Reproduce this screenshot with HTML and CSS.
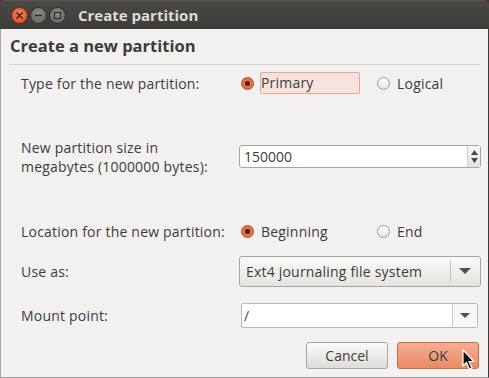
FILE: index.html
```html
<!DOCTYPE html>
<html lang="en">
<head>
    <meta charset="UTF-8">
    <title>Create partition</title>
    <link rel="stylesheet" href="styles.css">
</head>
<body>
    <div class="window">
        <div class="titlebar">
            <div class="wm-buttons">
                <span class="wm close">
                    <svg width="9" height="9" viewBox="0 0 9 9"><path d="M1.5 1.5 L7.5 7.5 M7.5 1.5 L1.5 7.5" stroke="#3a1a10" stroke-width="1.4"/></svg>
                </span>
                <span class="wm">
                    <svg width="9" height="9" viewBox="0 0 9 9"><path d="M1 4.5 H8" stroke="#2e2e2c" stroke-width="1.4"/></svg>
                </span>
                <span class="wm">
                    <svg width="9" height="9" viewBox="0 0 9 9"><rect x="1.5" y="1.5" width="6" height="6" fill="none" stroke="#2e2e2c" stroke-width="1.2"/></svg>
                </span>
            </div>
            <span class="title">Create partition</span>
        </div>
        <div class="content">
            <h1 class="heading">Create a new partition</h1>
            <div class="form">
                <div class="row row-type">
                    <label class="label">Type for the new partition:</label>
                    <div class="radios">
                        <div class="option">
                            <span class="radio checked"></span>
                            <span class="radio-text focus">Primary</span>
                        </div>
                        <div class="option">
                            <span class="radio"></span>
                            <span class="radio-text">Logical</span>
                        </div>
                    </div>
                </div>
                <div class="row row-size">
                    <label class="label">New partition size in<br>megabytes (1000000 bytes):</label>
                    <div class="spin">
                        <span class="spin-value">150000</span>
                        <span class="spin-arrows">
                            <svg width="9" height="17" viewBox="0 0 9 17"><path d="M1 7 L4.5 2 L8 7 Z M1 10 L4.5 15 L8 10 Z" fill="#4a4a48"/></svg>
                        </span>
                    </div>
                </div>
                <div class="row row-loc">
                    <label class="label">Location for the new partition:</label>
                    <div class="radios">
                        <div class="option">
                            <span class="radio checked"></span>
                            <span class="radio-text">Beginning</span>
                        </div>
                        <div class="option">
                            <span class="radio"></span>
                            <span class="radio-text">End</span>
                        </div>
                    </div>
                </div>
                <div class="row row-use">
                    <label class="label">Use as:</label>
                    <div class="combo">
                        <span class="combo-text">Ext4 journaling file system</span>
                        <span class="combo-sep"></span>
                        <span class="combo-arrow"></span>
                    </div>
                </div>
                <div class="row row-mount">
                    <label class="label">Mount point:</label>
                    <div class="entry-combo">
                        <span class="entry-text">/</span>
                        <span class="entry-arrow"><span class="combo-arrow"></span></span>
                    </div>
                </div>
            </div>
            <div class="actions">
                <button class="btn">Cancel</button>
                <button class="btn btn-ok">OK
                    <svg class="cursor" width="14" height="22" viewBox="0 0 14 22"><path d="M1 1 L1 17 L4.5 13.5 L7.5 20 L10 19 L7 12.5 L12 12.5 Z" fill="#111" stroke="#fff" stroke-width="1.2" stroke-linejoin="round"/></svg>
                </button>
            </div>
        </div>
    </div>
</body>
</html>
```

FILE: styles.css
```css
* {
    box-sizing: border-box;
}
html, body {
    margin: 0;
    padding: 0;
    background-color: #5a2a45;
}
body {
    font-family: "Open Sans", "DejaVu Sans", sans-serif;
    font-size: 14px;
    color: #3c3c3c;
    width: 489px;
    height: 378px;
    overflow: hidden;
}
.window {
    width: 489px;
    height: 378px;
    display: flex;
    flex-direction: column;
    border-radius: 5px 5px 0 0;
    overflow: hidden;
    background-color: #3c3b37;
}
.titlebar {
    height: 29px;
    flex-shrink: 0;
    display: flex;
    align-items: center;
    background: linear-gradient(#4a4945, #3c3b37);
    border-top: 1px solid #56554f;
    padding-left: 11px;
}
.wm-buttons {
    display: flex;
    gap: 2px;
    margin-right: 12px;
}
.wm {
    width: 17px;
    height: 17px;
    border-radius: 50%;
    background: radial-gradient(circle at 50% 35%, #8d8c87, #5f5e5a);
    border: 1px solid #2e2d2a;
    display: flex;
    align-items: center;
    justify-content: center;
}
.wm.close {
    background: radial-gradient(circle at 50% 35%, #f6835a, #d9451b);
    border-color: #6b2a14;
}
.title {
    color: #dfdbd2;
    font-weight: bold;
    font-size: 15px;
}
.content {
    flex: 1;
    background-color: #f2f1f0;
    border-left: 1px solid #a4a39e;
    border-right: 1px solid #3c3b37;
    border-bottom: 1px solid #a4a39e;
    padding: 0 8px 0 8px;
    display: flex;
    flex-direction: column;
}
.heading {
    margin: 0;
    font-size: 16.5px;
    font-weight: bold;
    color: #3c3c3c;
    padding: 7px 0 8px 1px;
    border-bottom: 1px solid #d6d4d0;
    line-height: 20px;
}
.form {
    padding-left: 12px;
}
.row {
    display: grid;
    grid-template-columns: 218px 242px;
    align-items: center;
}
.row-type {
    height: 36px;
}
.row-size {
    height: 52px;
    margin-top: 30px;
}
.row-loc {
    height: 28px;
    margin-top: 34px;
}
.row-use {
    height: 34px;
    margin-top: 9px;
}
.row-mount {
    height: 32px;
    margin-top: 11px;
}
.label {
    line-height: 19px;
    letter-spacing: 0.2px;
}
.radios {
    display: grid;
    grid-template-columns: 136px 1fr;
    align-items: center;
    padding-left: 2px;
}
.option {
    display: flex;
    align-items: center;
}
.radio {
    width: 13px;
    height: 13px;
    border-radius: 50%;
    border: 1px solid #9b9994;
    background: linear-gradient(#ffffff, #e6e4e0);
    flex-shrink: 0;
}
.radio.checked {
    border-color: #b0492a;
    background: radial-gradient(circle, #4b2a20 0 2.5px, #f07746 3px, #e45c2c 100%);
}
.radio-text {
    padding-left: 7px;
    line-height: 19px;
    letter-spacing: 0.2px;
}
.radio-text.focus {
    margin-left: 6px;
    padding-left: 0;
    width: 100px;
    height: 22px;
    line-height: 20px;
    background-color: #f6e3dd;
    border: 1px solid #eca68a;
    border-radius: 2px;
}
.spin {
    height: 23px;
    background-color: #ffffff;
    border: 1px solid #a8a6a1;
    border-radius: 3px;
    display: flex;
    align-items: center;
    justify-content: space-between;
    margin-top: -2px;
}
.spin-value {
    padding-left: 4px;
    color: #3c3c3c;
}
.spin-arrows {
    width: 13px;
    height: 21px;
    border-left: 1px solid #d0ceca;
    background: linear-gradient(#f8f7f6, #e4e2de);
    display: flex;
    align-items: center;
    justify-content: center;
}
.combo {
    height: 31px;
    border: 1px solid #a8a6a1;
    border-radius: 3px;
    background: linear-gradient(#fafaf9, #e5e3df);
    display: flex;
    align-items: center;
    padding-left: 6px;
}
.combo-text {
    flex: 1;
    letter-spacing: 0.2px;
}
.combo-sep {
    width: 1px;
    height: 22px;
    background-color: #c3c1bc;
    margin-right: 8px;
}
.combo-arrow {
    width: 0;
    height: 0;
    border-left: 6px solid transparent;
    border-right: 6px solid transparent;
    border-top: 6px solid #505050;
    margin-right: 9px;
}
.entry-combo {
    width: 237px;
    height: 25px;
    margin-left: 2px;
    border: 1px solid #bbb9b4;
    border-radius: 2px;
    background-color: #ffffff;
    display: flex;
    align-items: center;
}
.entry-text {
    flex: 1;
    padding-left: 2px;
}
.entry-arrow {
    height: 100%;
    width: 25px;
    border-left: 1px solid #d0ceca;
    background-color: #f7f6f5;
    display: flex;
    align-items: center;
    justify-content: center;
}
.entry-arrow .combo-arrow {
    border-left-width: 5px;
    border-right-width: 5px;
    border-top-width: 5px;
    margin-right: 0;
}
.actions {
    display: flex;
    justify-content: flex-end;
    gap: 9px;
    padding-right: 1px;
    margin-top: 11px;
}
.btn {
    position: relative;
    width: 82px;
    height: 27px;
    font-family: "Open Sans", "DejaVu Sans", sans-serif;
    font-size: 14px;
    color: #3c3c3c;
    border: 1px solid #a8a6a1;
    border-radius: 3px;
    background: linear-gradient(#fbfbfa, #dedcd8);
    padding: 0;
}
.btn-ok {
    border-color: #c86c4c;
    background: linear-gradient(#f5ae93, #ea8a66);
}
.cursor {
    position: absolute;
    left: 64px;
    top: 6px;
}
```
